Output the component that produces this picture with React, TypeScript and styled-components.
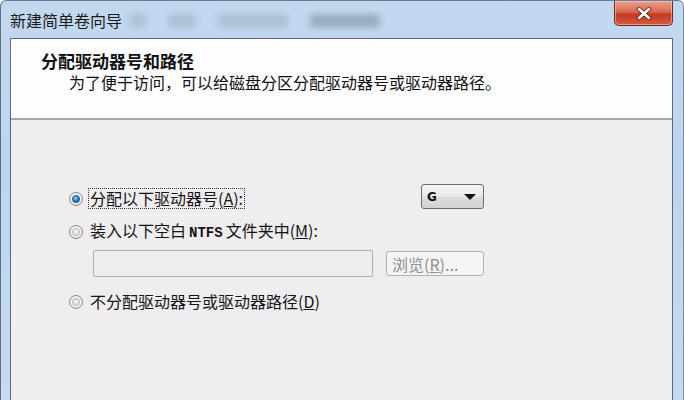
import React from 'react';
import styled, { createGlobalStyle } from 'styled-components';

const GlobalStyle = createGlobalStyle`
  html, body {
    margin: 0;
    padding: 0;
    width: 684px;
    height: 400px;
    overflow: hidden;
  }
  body {
    font-family: 'Noto Sans CJK SC', 'Noto Sans', sans-serif;
    color: #111;
  }
`;

// Window frame
const Window = styled.div`
  width: 684px;
  height: 400px;
  box-sizing: border-box;
  display: flex;
  flex-direction: column;
  background: linear-gradient(180deg, #c3d8ef 0%, #bcd5f0 40%, #c5daf1 100%);
  border-left: 1px solid #5f6f82;
  border-right: 1px solid #7f8fa2;
  border-top: 1px solid #6a7b90;
  border-radius: 6px 6px 0 0;
  padding: 0 10px 0 9px;
  overflow: hidden;
`;

const TitleBar = styled.div`
  height: 37px;
  display: flex;
  align-items: flex-start;
  justify-content: space-between;
  position: relative;
`;

const Title = styled.div`
  font-size: 16px;
  line-height: 22px;
  padding-top: 8px;
  color: #1a1a1a;
`;

const Smudges = styled.div`
  position: absolute;
  left: 120px;
  top: 4px;
  display: flex;
  gap: 22px;
  filter: blur(3px);
  opacity: 0.3;
  pointer-events: none;
`;

const Smudge = styled.div<{ $w: number; $dark?: boolean }>`
  width: ${(p) => p.$w}px;
  height: 14px;
  margin-top: 9px;
  background: ${(p) => (p.$dark ? '#3d4a5c' : '#7d8ba0')};
  border-radius: 3px;
`;

const CloseButton = styled.div`
  width: 59px;
  height: 25px;
  box-sizing: border-box;
  border: 1px solid #6b2a22;
  border-top: none;
  border-radius: 0 0 5px 5px;
  background: linear-gradient(180deg, #e9a08c 0%, #d96a52 45%, #c23a22 55%, #d45a42 100%);
  box-shadow: inset 0 0 0 1px rgba(255, 220, 210, 0.5);
  display: flex;
  align-items: center;
  justify-content: center;
`;

// Client area
const Client = styled.div`
  flex: 1;
  display: flex;
  flex-direction: column;
  border: 1px solid #5d6a78;
  border-bottom: none;
  background: #efedef;
`;

const Header = styled.div`
  height: 81px;
  background: #fdfcfe;
  border-bottom: 2px solid #a4a4a6;
  box-sizing: border-box;
  padding: 11px 0 0 30px;
`;

const HeaderTitle = styled.div`
  font-size: 17px;
  font-weight: 700;
  line-height: 22px;
`;

const HeaderText = styled.div`
  font-size: 16px;
  line-height: 20px;
  margin-left: 28px;
`;

const Body = styled.div`
  flex: 1;
  padding: 68px 0 0 58px;
  display: flex;
  flex-direction: column;
  width: 415px;
`;

const Row = styled.div<{ $mt?: number }>`
  display: flex;
  align-items: center;
  margin-top: ${(p) => p.$mt ?? 0}px;
`;

const RadioCircle = styled.span<{ $checked?: boolean }>`
  width: 14px;
  height: 14px;
  box-sizing: border-box;
  border-radius: 50%;
  border: 1px solid #868b92;
  background: radial-gradient(circle at 50% 40%, #ffffff 0%, #e0e0e0 100%);
  display: inline-flex;
  align-items: center;
  justify-content: center;
  flex: none;

  &::after {
    content: '';
    width: 8px;
    height: 8px;
    border-radius: 50%;
    background: ${(p) =>
      p.$checked
        ? 'radial-gradient(circle at 40% 35%, #a9d4f4 0%, #2a78c4 55%, #173f75 100%)'
        : 'radial-gradient(circle at 50% 40%, #f8f8f8 0%, #d0d0d0 100%)'};
    border: 1px solid ${(p) => (p.$checked ? '#1d4f86' : '#b8b8b8')};
    box-sizing: border-box;
  }
`;

const Label = styled.span<{ $focus?: boolean }>`
  font-size: 16px;
  line-height: 19px;
  margin-left: 5px;
  padding: 0 1px;
  color: #151515;
  border: 1px dotted ${(p) => (p.$focus ? '#333' : 'transparent')};
  white-space: pre;
`;

const Mono = styled.span`
  font-family: 'Liberation Mono', 'DejaVu Sans Mono', monospace;
  font-size: 14px;
  font-weight: 700;
  margin: 0 3px;
`;

const Select = styled.div`
  margin: -4px 0 0 auto;
  width: 63px;
  height: 25px;
  box-sizing: border-box;
  border: 1px solid #6e6e6e;
  border-radius: 3px;
  background: linear-gradient(180deg, #f3f3f3 0%, #ebebeb 45%, #dcdcdc 55%, #d2d2d2 100%);
  display: flex;
  align-items: center;
  justify-content: space-between;
  padding: 0 7px 0 5px;
  font-size: 12px;
  font-family: 'DejaVu Sans', sans-serif;
  font-weight: 700;
`;

const Arrow = styled.span`
  width: 0;
  height: 0;
  border-left: 6px solid transparent;
  border-right: 6px solid transparent;
  border-top: 6px solid #111;
`;

const PathRow = styled.div`
  display: flex;
  align-items: center;
  margin: 6px 0 0 24px;
  gap: 13px;
`;

const TextBox = styled.div`
  width: 280px;
  height: 27px;
  box-sizing: border-box;
  border: 1px solid #aeaeae;
  border-radius: 2px;
  background: #eeeeee;
`;

const BrowseButton = styled.div`
  width: 98px;
  height: 25px;
  box-sizing: border-box;
  border: 1px solid #adb2b5;
  border-radius: 3px;
  background: #f4f4f4;
  color: #8f8f8f;
  font-size: 16px;
  display: flex;
  align-items: center;
  padding-left: 5px;
  white-space: pre;
`;

export default function App() {
  return (
    <>
      <GlobalStyle />
      <Window>
        <TitleBar>
          <Title>新建简单卷向导</Title>
          <Smudges>
            <Smudge $w={16} />
            <Smudge $w={28} />
            <Smudge $w={70} />
            <Smudge $w={70} $dark />
          </Smudges>
          <CloseButton>
            <svg width="16" height="13" viewBox="0 0 16 13">
              <path
                d="M3 2 L13 11 M13 2 L3 11"
                stroke="#5a1a12"
                strokeWidth="4.2"
                strokeLinecap="round"
              />
              <path
                d="M3 2 L13 11 M13 2 L3 11"
                stroke="#ffffff"
                strokeWidth="2.6"
                strokeLinecap="round"
              />
            </svg>
          </CloseButton>
        </TitleBar>
        <Client>
          <Header>
            <HeaderTitle>分配驱动器号和路径</HeaderTitle>
            <HeaderText>为了便于访问，可以给磁盘分区分配驱动器号或驱动器路径。</HeaderText>
          </Header>
          <Body>
            <Row>
              <RadioCircle $checked />
              <Label $focus>分配以下驱动器号(<u>A</u>):</Label>
              <Select>
                <span>G</span>
                <Arrow />
              </Select>
            </Row>
            <Row $mt={11}>
              <RadioCircle />
              <Label>
                装入以下空白<Mono>NTFS</Mono>文件夹中(<u>M</u>):
              </Label>
            </Row>
            <PathRow>
              <TextBox />
              <BrowseButton>浏览(<u>R</u>)...</BrowseButton>
            </PathRow>
            <Row $mt={14}>
              <RadioCircle />
              <Label>不分配驱动器号或驱动器路径(<u>D</u>)</Label>
            </Row>
          </Body>
        </Client>
      </Window>
    </>
  );
}
